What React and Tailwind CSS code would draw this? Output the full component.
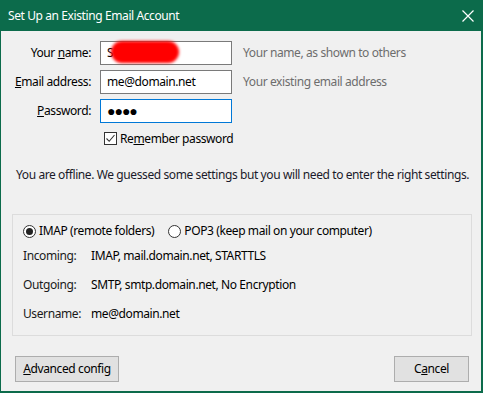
import React from "react";

const font = { fontFamily: '"Noto Sans", "Liberation Sans", sans-serif' };

function Field({ label, children, hint, focused }) {
  return (
    <div className="flex items-center h-[24px]">
      <div className="w-[91px] text-right pr-[1px] text-[12px] text-black">{label}</div>
      <div
        className={
          "ml-[8px] w-[132px] h-[24px] bg-white border flex items-center px-[6px] text-[12px] text-black relative " +
          (focused ? "border-[#0078d7]" : "border-[#7a7a7a]")
        }
      >
        {children}
      </div>
      {hint && <div className="ml-[11px] text-[12px] text-[#6d6d6d]">{hint}</div>}
    </div>
  );
}

export default function App() {
  return (
    <div
      className="w-[483px] h-[393px] bg-[#f0f0f0] border-l border-r-2 border-b-2 border-[#0c6b4b] flex flex-col tracking-[-0.4px] overflow-hidden"
      style={font}
    >
      <div className="h-[31px] bg-[#0c6b4b] flex items-center justify-between pl-[8px] pr-[6px] -ml-px -mr-[2px] shrink-0">
        <span className="text-white text-[12px]">Set Up an Existing Email Account</span>
        <svg width="14" height="14" viewBox="0 0 14 14" className="mr-[2px]">
          <path d="M1.5 1.5 L12.5 12.5 M12.5 1.5 L1.5 12.5" stroke="white" strokeWidth="1.2" fill="none" />
        </svg>
      </div>

      <div className="flex flex-col pt-[10px] gap-[5px]">
        <Field
          label={<span>Your <u>n</u>ame:</span>}
          hint="Your name, as shown to others"
        >
          <span>S</span>
          <div className="absolute left-[10px] top-[-1px] w-[68px] h-[22px] rounded-full bg-[#ff0000] blur-[1.5px]" />
        </Field>
        <Field label={<span><u>E</u>mail address:</span>} hint="Your existing email address">
          <span>me@domain.net</span>
        </Field>
        <Field label={<span><u>P</u>assword:</span>} focused>
          <span className="text-[14px] tracking-[-1px] leading-none">●●●●</span>
        </Field>
      </div>

      <div className="flex items-center ml-[103px] mt-[9px] h-[13px]">
        <div className="w-[13px] h-[13px] border border-[#333] bg-white flex items-center justify-center">
          <svg width="11" height="11" viewBox="0 0 11 11">
            <path d="M1.5 5.5 L4.2 8.3 L9.5 2" stroke="#333" strokeWidth="1.1" fill="none" />
          </svg>
        </div>
        <span className="ml-[3px] text-[12px] text-black">Re<u>m</u>ember password</span>
      </div>

      <div className="mt-[22px] ml-[15px] text-[12px] text-[#1a1a2a] whitespace-nowrap h-[16px] leading-[16px]">
        You are offline. We guessed some settings but you will need to enter the right settings.
      </div>

      <div className="mt-[31px] ml-[11px] w-[460px] h-[122px] border border-[#dcdcdc] flex flex-col pl-[10px] shrink-0">
        <div className="flex items-center h-[14px] mt-[9px] text-[12px] text-black">
          <span className="w-[13px] h-[13px] rounded-full border border-[#333] bg-white flex items-center justify-center">
            <span className="w-[7px] h-[7px] rounded-full bg-[#222]" />
          </span>
          <span className="ml-[3px]">IMAP (remote folders)</span>
          <span className="ml-[14px] w-[13px] h-[13px] rounded-full border border-[#333] bg-white" />
          <span className="ml-[3px]">POP3 (keep mail on your computer)</span>
        </div>
        <div className="flex flex-col gap-[13px] mt-[10px] text-[12px] text-black">
          {[
            ["Incoming:", "IMAP, mail.domain.net, STARTTLS"],
            ["Outgoing:", "SMTP, smtp.domain.net, No Encryption"],
            ["Username:", "me@domain.net"],
          ].map(([k, v]) => (
            <div key={k} className="flex items-center h-[16px] leading-[16px]">
              <span className="w-[68px] text-[#1a1a1a]">{k}</span>
              <span>{v}</span>
            </div>
          ))}
        </div>
      </div>

      <div className="mt-[20px] flex justify-between pl-[14px] pr-[12px] shrink-0">
        <button className="w-[104px] h-[26px] bg-[#e1e1e1] border border-[#adadad] text-[12px] text-black">
          <u>A</u>dvanced config
        </button>
        <button className="w-[75px] h-[26px] bg-[#e1e1e1] border border-[#adadad] text-[12px] text-black">
          C<u>a</u>ncel
        </button>
      </div>
    </div>
  );
}
